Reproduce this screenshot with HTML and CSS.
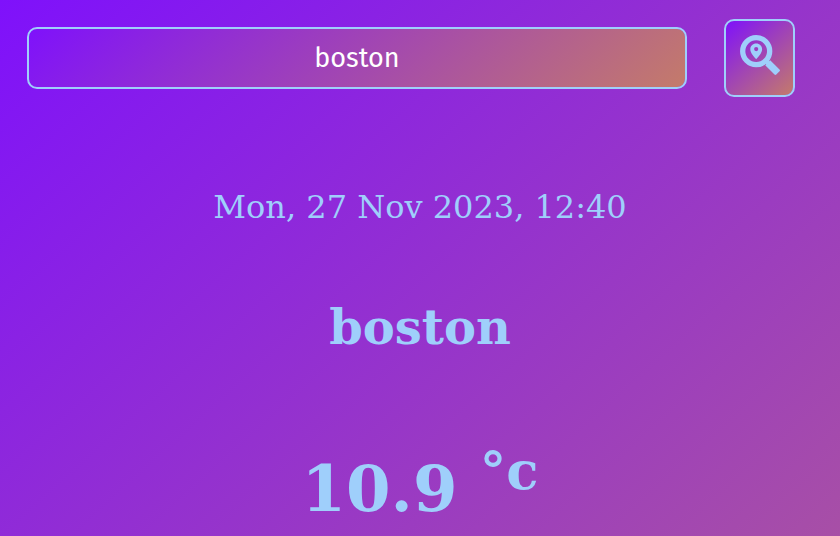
FILE: index.html
```
<!DOCTYPE html>
<html lang="en">
<head>
<meta charset="utf-8">
<meta name="viewport" content="width=device-width, initial-scale=1">
<title>Weather</title>
<link rel="stylesheet" href="styles.css">
</head>
<body>
<form class="search">
  <input class="search-input" type="text" aria-label="City" value="boston">
  <button class="search-button" type="button" aria-label="Search">
    <svg class="search-icon" viewBox="0 0 40 40" aria-hidden="true">
      <circle cx="16.200" cy="16.200" r="13.500" fill="none" stroke="currentColor" stroke-width="5.300"/>
      <path d="M25 25L29 29" stroke="currentColor" stroke-width="4"/>
      <path d="M30.200 25.200l9.300 9.300q.9.900 0 1.800l-3.200 3.200q-.9.900-1.800 0l-9.300-9.300z" fill="currentColor"/>
      <path fill="currentColor" fill-rule="evenodd" d="M16.200 8.500c-3.400 0-5.900 2.500-5.900 5.700 0 3.700 3.800 7.700 5.900 10 2.100-2.300 5.900-6.300 5.900-10 0-3.200-2.500-5.700-5.900-5.700zm0 3.500a2.100 2.100 0 1 1 0 4.200 2.100 2.100 0 0 1 0-4.200z"/>
    </svg>
  </button>
</form>
<main class="weather">
  <p class="date">Mon, 27 Nov 2023, 12:40</p>
  <h2 class="city">boston</h2>
  <h1 class="temperature">10.9 <sup class="unit">°c</sup></h1>
</main>
</body>
</html>
```
FILE: styles.css
```
:root {
  --sky: #9fcffb;
  --fade: linear-gradient(138deg, #7f11fb, #c47b6a);
}

* {
  box-sizing: border-box;
}

html {
  height: 100%;
  overflow: hidden;
}

body {
  margin: 0;
  color: var(--sky);
  font-family: "DejaVu Serif", serif;
  background: var(--fade) 0 0 / 100% 1450px no-repeat;
}

.search {
  display: flex;
  align-items: center;
  gap: 37px;
  padding: 19px 45px 0 27px;
}

.search-input,
.search-button {
  border: 2px solid var(--sky);
  border-radius: 10px;
  background: var(--fade) padding-box;
}

.search-input {
  flex: 1;
  min-width: 0;
  height: 62px;
  padding: 0 16px;
  color: #fff;
  font: 27px "Fira Sans", "Noto Sans", sans-serif;
  text-align: center;
}

.search-button {
  width: 71px;
  height: 78px;
  padding: 0 0 6px;
  color: var(--sky);
}

.search-icon {
  display: block;
  width: 40px;
  height: 40px;
  margin: 0 auto;
}

.weather {
  padding-top: 88px;
  text-align: center;
}

.date {
  margin: 0;
  font-size: 32px;
  line-height: 44px;
}

.city {
  margin: 70px 0 0;
  font-size: 48px;
  line-height: 56px;
}

.temperature {
  margin: 89px 0 0;
  font-size: 64px;
  line-height: 80px;
}

.unit {
  font-size: 53px;
  line-height: 1;
}
```
